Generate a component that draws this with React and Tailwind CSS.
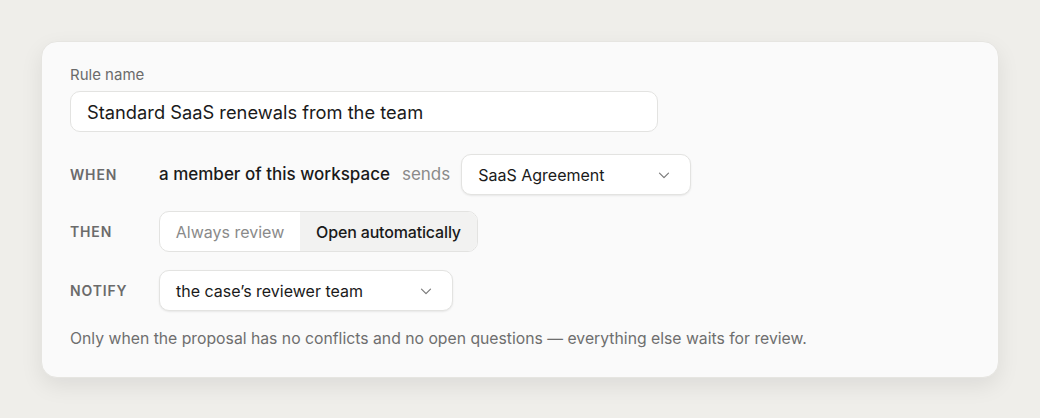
import React, { useState } from "react";

function Chevron() {
  return (
    <svg width="18" height="18" viewBox="0 0 24 24" fill="none" stroke="#7a7a7a" strokeWidth="1.6" strokeLinecap="round" strokeLinejoin="round">
      <path d="M6 9.5l6 6 6-6" />
    </svg>
  );
}

function Select({ value, className }) {
  return (
    <button
      className={
        "h-[41px] flex items-center justify-between rounded-[10px] bg-white border border-[#e3e3e1] shadow-[0_1px_2px_rgba(0,0,0,0.08)] pl-4 pr-[17px] text-[16px] text-[#1a1a1a] " +
        className
      }
    >
      <span>{value}</span>
      <Chevron />
    </button>
  );
}

export default function App() {
  const [mode, setMode] = useState("auto");

  return (
    <div className="min-h-screen bg-[#efeeea] px-[41px] pt-[41px] font-['Inter',sans-serif]">
      <div className="bg-[#fafafa] rounded-[16px] border border-[#e6e5e1] shadow-[0_8px_22px_rgba(0,0,0,0.08)] px-[28px] pt-[23px] pb-[28px]">
        {/* Rule name */}
        <label className="block text-[15px] text-[#6b6b6b] leading-5">Rule name</label>
        <input
          className="mt-[6px] w-[588px] h-[41px] rounded-[10px] bg-white border border-[#e3e3e1] px-4 text-[18.3px] text-[#1a1a1a] focus:outline-none"
          defaultValue="Standard SaaS renewals from the team"
        />

        {/* Conditions */}
        <div className="mt-[22px] flex flex-col">
          <div className="flex items-center">
            <span className="w-[89px] text-[14px] font-semibold tracking-[0.06em] text-[#6b6b6b]">WHEN</span>
            <span className="text-[17px] font-medium text-[#1a1a1a]">a member of this workspace</span>
            <span className="ml-3 text-[17px] text-[#8a8a8a]">sends</span>
            <Select value="SaaS Agreement" className="ml-[11px] w-[230px]" />
          </div>

          <div className="mt-4 flex items-center">
            <span className="w-[89px] text-[14px] font-semibold tracking-[0.06em] text-[#6b6b6b]">THEN</span>
            <div className="flex h-[41px] rounded-[10px] border border-[#e3e3e1] overflow-hidden bg-white">
              <button
                onClick={() => setMode("review")}
                className={
                  "w-[140px] text-[16px] " +
                  (mode === "review" ? "bg-[#f2f2f1] text-[#1a1a1a] font-medium" : "text-[#8a8a8a]")
                }
              >
                Always review
              </button>
              <button
                onClick={() => setMode("auto")}
                className={
                  "w-[177px] text-[16px] " +
                  (mode === "auto" ? "bg-[#f2f2f1] text-[#1a1a1a] font-[500] tracking-[-0.01em]" : "text-[#8a8a8a]")
                }
              >
                Open automatically
              </button>
            </div>
          </div>

          <div className="mt-[18px] flex items-center">
            <span className="w-[89px] text-[14px] font-semibold tracking-[0.06em] text-[#6b6b6b]">NOTIFY</span>
            <Select value="the case’s reviewer team" className="w-[294px]" />
          </div>
        </div>

        <p className="mt-[18px] text-[15.75px] leading-5 text-[#6e6e6e]">
          Only when the proposal has no conflicts and no open questions — everything else waits for review.
        </p>
      </div>
    </div>
  );
}
